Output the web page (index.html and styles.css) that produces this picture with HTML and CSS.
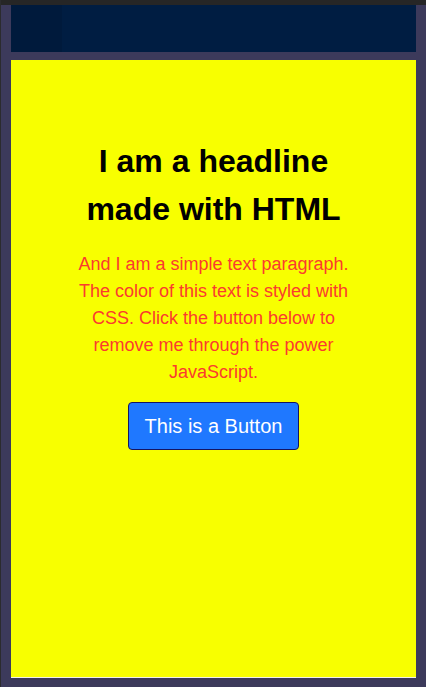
FILE: index.html
```html
<!DOCTYPE html>
<html lang="en">
<head>
<meta charset="utf-8">
<title>Demo</title>
<link rel="stylesheet" href="styles.css">
</head>
<body>
<div class="topbar"></div>
<div class="frame">
  <header class="navbar">
    <div class="navbar-side"></div>
  </header>
  <main class="page">
    <h1 class="headline">I am a headline made with HTML</h1>
    <p class="para">And I am a simple text paragraph. The color of this text is styled with CSS. Click the button below to remove me through the power JavaScript.</p>
    <button class="btn" type="button">This is a Button</button>
  </main>
</div>
</body>
</html>
```
FILE: styles.css
```css
html, body {
  margin: 0;
  padding: 0;
}
*, *::before, *::after {
  box-sizing: border-box;
}
body {
  width: 426px;
  height: 687px;
  background: #3c3a5b;
  font-family: "Liberation Sans", Arial, sans-serif;
  overflow: hidden;
  border-left: 1px solid #2b2b2e;
}
.topbar {
  height: 5px;
  background: #262626;
}
.frame {
  padding: 0 10px 0 10px;
  display: flex;
  flex-direction: column;
  gap: 8px;
}
.navbar {
  height: 47px;
  background: #001d42;
  display: flex;
}
.navbar-side {
  width: 51px;
  background: #001a3c;
}
.page {
  height: 618px;
  background: #f8ff00;
  border-bottom: 1px solid #f2f2e6;
  padding: 77px 57px 0;
  display: flex;
  flex-direction: column;
  align-items: center;
  text-align: center;
}
.headline {
  margin: 0;
  font-size: 32px;
  line-height: 48px;
  font-weight: 700;
  color: #000;
}
.para {
  margin: 18px 0 0;
  font-size: 18px;
  line-height: 27px;
  color: #fb3b2e;
}
.btn {
  margin-top: 16px;
  font-family: "Liberation Sans", Arial, sans-serif;
  font-size: 20px;
  line-height: 24px;
  padding: 11px 16px;
  color: #fff;
  background: #1f78ff;
  border: 1px solid #141463;
  border-radius: 4px;
}
```
